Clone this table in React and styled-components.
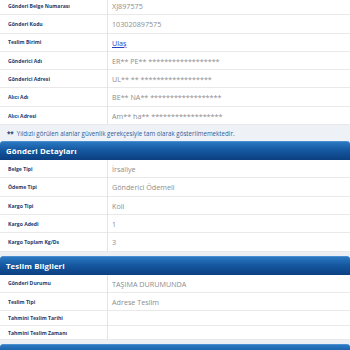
import React from "react";
import styled, { createGlobalStyle } from "styled-components";

const GlobalStyle = createGlobalStyle`
  html, body { margin: 0; padding: 0; }
  body {
    background: #eceff3;
    font-family: "Open Sans", "Noto Sans", sans-serif;
    width: 350px;
    overflow: hidden;
  }
`;

const Page = styled.div`
  display: flex;
  flex-direction: column;
  margin-top: -3px;
`;

const Panel = styled.section`
  background: #ffffff;
  display: flex;
  flex-direction: column;
  margin-top: ${(p) => (p.$gap ? "4px" : "0")};
`;

const Header = styled.div`
  height: 19px;
  display: flex;
  align-items: center;
  padding: 0 6px;
  border-radius: 3px 3px 0 0;
  background: linear-gradient(to bottom, #2a78c2 0%, #1558a0 45%, #0c3f80 100%);
  border-top: 1px solid #4b8fd0;
  box-sizing: border-box;
  color: #ffffff;
  font-weight: 700;
  font-size: 7.8px;
  letter-spacing: 0.1px;
`;

const Table = styled.table`
  width: 100%;
  border-collapse: collapse;
`;

const Row = styled.tr`
  border-bottom: 1px solid #e9e9ea;
`;

const Label = styled.td`
  width: 99px;
  padding: 4px 0 2px 8px;
  border-right: 1px solid #e4e4e6;
  color: #1d3b6c;
  font-weight: 700;
  font-size: 5.1px;
  line-height: 7.5px;
  vertical-align: middle;
  white-space: nowrap;
`;

const Value = styled.td`
  padding: 4px 4px 2px 4px;
  color: #8d8d8f;
  font-size: 7.2px;
  line-height: 11.3px;
  vertical-align: middle;
  white-space: nowrap;
`;

const Link = styled.a`
  color: #2b3fbf;
  text-decoration: underline;
`;

const Note = styled.div`
  height: 16px;
  display: flex;
  align-items: center;
  gap: 3px;
  padding: 0 7px;
  background: #eef1f5;
  color: #2c5d9c;
  font-size: 6.2px;
`;

const Stars = styled.b`
  color: #1d3b6c;
  font-weight: 700;
`;

const sender = [
  ["Gönderi Belge Numarası", "XJ897575"],
  ["Gönderi Kodu", "103020897575"],
  ["Teslim Birimi", "__LINK__Ulaş"],
  ["Gönderici Adı", "ER** PE** ******************"],
  ["Gönderici Adresi", "UL** ** ******************"],
  ["Alıcı Adı", "BE** NA** ******************"],
  ["Alıcı Adresi", "Am** ha** ******************"],
];

const details = [
  ["Belge Tipi", "İrsaliye"],
  ["Ödeme Tipi", "Gönderici Ödemeli"],
  ["Kargo Tipi", "Koli"],
  ["Kargo Adedi", "1"],
  ["Kargo Toplam Kg/Ds", "3"],
];

const delivery = [
  ["Gönderi Durumu", "TAŞIMA DURUMUNDA"],
  ["Teslim Tipi", "Adrese Teslim"],
  ["Tahmini Teslim Tarihi", ""],
  ["Tahmini Teslim Zamanı", ""],
];

function Rows({ items }) {
  return (
    <Table>
      <tbody>
        {items.map(([k, v]) => (
          <Row key={k}>
            <Label>{k}</Label>
            <Value>
              {v.startsWith("__LINK__") ? (
                <Link href="#">{v.replace("__LINK__", "")}</Link>
              ) : (
                v
              )}
            </Value>
          </Row>
        ))}
      </tbody>
    </Table>
  );
}

export default function App() {
  return (
    <>
      <GlobalStyle />
      <Page>
        <Panel>
          <Rows items={sender} />
          <Note>
            <Stars>**</Stars>
            <span>
              Yıldızlı görülen alanlar güvenlik gerekçesiyle tam olarak gösterilmemektedir.
            </span>
          </Note>
        </Panel>
        <Panel>
          <Header>Gönderi Detayları</Header>
          <Rows items={details} />
        </Panel>
        <Panel $gap>
          <Header>Teslim Bilgileri</Header>
          <Rows items={delivery} />
        </Panel>
        <Panel $gap>
          <Header />
        </Panel>
      </Page>
    </>
  );
}
